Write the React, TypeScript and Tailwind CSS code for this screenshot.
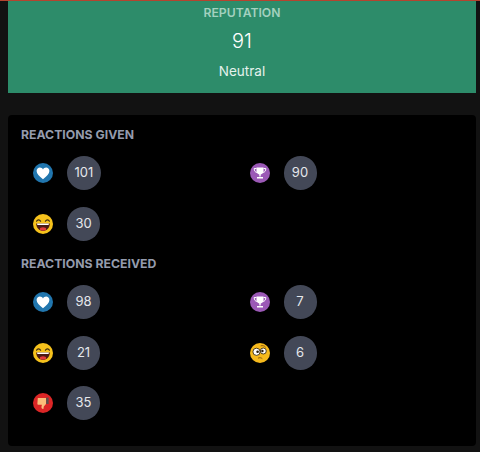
const font = "font-['Inter','Noto_Sans',sans-serif]";

function Heart() {
  return (
    <svg viewBox="0 0 20 20" className="w-5 h-5">
      <circle cx="10" cy="10" r="10" fill="#2176ae" />
      <path d="M10 16.2 C6.2 13.2 3.6 11 3.6 8 C3.6 5.9 5.2 4.6 6.9 4.6 C8.2 4.6 9.4 5.3 10 6.4 C10.6 5.3 11.8 4.6 13.1 4.6 C14.8 4.6 16.4 5.9 16.4 8 C16.4 11 13.8 13.2 10 16.2 Z" fill="#fff" />
    </svg>
  );
}

function Trophy() {
  return (
    <svg viewBox="0 0 20 20" className="w-5 h-5">
      <circle cx="10" cy="10" r="10" fill="#9b59b6" />
      <path d="M6.5 4.5 H13.5 V8 C13.5 10.2 12 11.5 10 11.5 C8 11.5 6.5 10.2 6.5 8 Z" fill="#fff" />
      <path d="M6.5 5.5 H4.2 C4.2 8 5.2 9.2 7 9.4 M13.5 5.5 H15.8 C15.8 8 14.8 9.2 13 9.4" fill="none" stroke="#fff" strokeWidth="1" />
      <path d="M9.3 11 H10.7 V13.5 H9.3 Z M7 14 H13 V15.6 H7 Z" fill="#fff" />
    </svg>
  );
}

function Laugh() {
  return (
    <svg viewBox="0 0 20 20" className="w-5 h-5">
      <circle cx="10" cy="10" r="10" fill="#f6c21c" />
      <path d="M3.6 7.2 C4.4 5.4 6.6 5.4 7.6 7.2 M12.4 7.2 C13.4 5.4 15.6 5.4 16.4 7.2" fill="none" stroke="#3a2a10" strokeWidth="1.2" strokeLinecap="round" />
      <path d="M3.2 9.6 H16.8 C16.8 14 13.8 17 10 17 C6.2 17 3.2 14 3.2 9.6 Z" fill="#4a1a14" />
      <path d="M4 9.6 H16 L15.6 11 H4.4 Z" fill="#fff" />
      <ellipse cx="10" cy="15" rx="3.2" ry="1.7" fill="#e23b3b" />
    </svg>
  );
}

function Confused() {
  return (
    <svg viewBox="0 0 20 20" className="w-5 h-5">
      <circle cx="10" cy="10" r="10" fill="#f6b91c" />
      <circle cx="6.5" cy="8.8" r="3.6" fill="#fff" stroke="#3a2a10" strokeWidth="0.9" />
      <circle cx="13.3" cy="8" r="3" fill="#fff" stroke="#3a2a10" strokeWidth="0.9" />
      <circle cx="7.6" cy="8.8" r="1.3" fill="#2a1d0a" />
      <circle cx="12.4" cy="8" r="1.2" fill="#2a1d0a" />
      <path d="M11 2.8 C12.6 2.2 14.4 2.8 15.4 4" fill="none" stroke="#8a5a10" strokeWidth="1" strokeLinecap="round" />
      <path d="M8.4 15 C9.6 14.4 11 14.6 12 15.4" fill="none" stroke="#8a5a10" strokeWidth="1" strokeLinecap="round" />
    </svg>
  );
}

function ThumbDown() {
  return (
    <svg viewBox="0 0 20 20" className="w-5 h-5">
      <circle cx="10" cy="10" r="10" fill="#dc2626" />
      <path d="M4.8 5 H13 V11 L10.8 13.4 L10.4 16 C9 16.2 8.2 15 8.5 13.6 L8.9 11.8 H5.4 C4.6 11.8 4.2 11 4.4 10.2 Z" fill="#fbbf7a" />
      <path d="M13.2 4.6 H15.6 V11 H13.2 Z" fill="#57534e" />
    </svg>
  );
}

type Reaction = { icon: React.ReactNode; count: number };

function ReactionItem({ icon, count }: Reaction) {
  return (
    <div className="flex items-center h-[34px]">
      <div className="ml-[13px] w-[34px] shrink-0">{icon}</div>
      <span className="flex items-center justify-center h-[34px] min-w-[33px] px-[7.5px] rounded-full bg-[#434857] text-[#e5e7eb] text-[13px]">
        {count}
      </span>
    </div>
  );
}

function Section({ title, items }: { title: string; items: Reaction[] }) {
  return (
    <section>
      <h3 className="text-[12.25px] ml-px leading-5 font-bold text-[#949bac]">{title}</h3>
      <div className="grid grid-cols-[216.5px_1fr] gap-y-[16.5px] mt-[11px]">
        {items.map((item, i) => (
          <ReactionItem key={i} {...item} />
        ))}
      </div>
    </section>
  );
}

export default function App() {
  return (
    <div className={`${font} w-[480px] h-[452px] overflow-hidden bg-[#121212] border-t border-[#b5442f] pl-2 pr-1`}>
      <div className="flex flex-col items-center h-[92px] bg-[#2d8c6a]">
        <div className="mt-[2px] text-[12.2px] leading-5 font-semibold text-[#a3d1bf]">REPUTATION</div>
        <div className="mt-[4px] text-xl leading-7 font-light text-white">91</div>
        <div className="mt-[6px] text-[13.5px] leading-5 text-[#e5f2ed]">Neutral</div>
      </div>
      <div className="mt-[22px] h-[331px] rounded bg-black px-3 pt-[10px] flex flex-col gap-[13.5px]">
        <Section
          title="REACTIONS GIVEN"
          items={[
            { icon: <Heart />, count: 101 },
            { icon: <Trophy />, count: 90 },
            { icon: <Laugh />, count: 30 },
          ]}
        />
        <Section
          title="REACTIONS RECEIVED"
          items={[
            { icon: <Heart />, count: 98 },
            { icon: <Trophy />, count: 7 },
            { icon: <Laugh />, count: 21 },
            { icon: <Confused />, count: 6 },
            { icon: <ThumbDown />, count: 35 },
          ]}
        />
      </div>
    </div>
  );
}
